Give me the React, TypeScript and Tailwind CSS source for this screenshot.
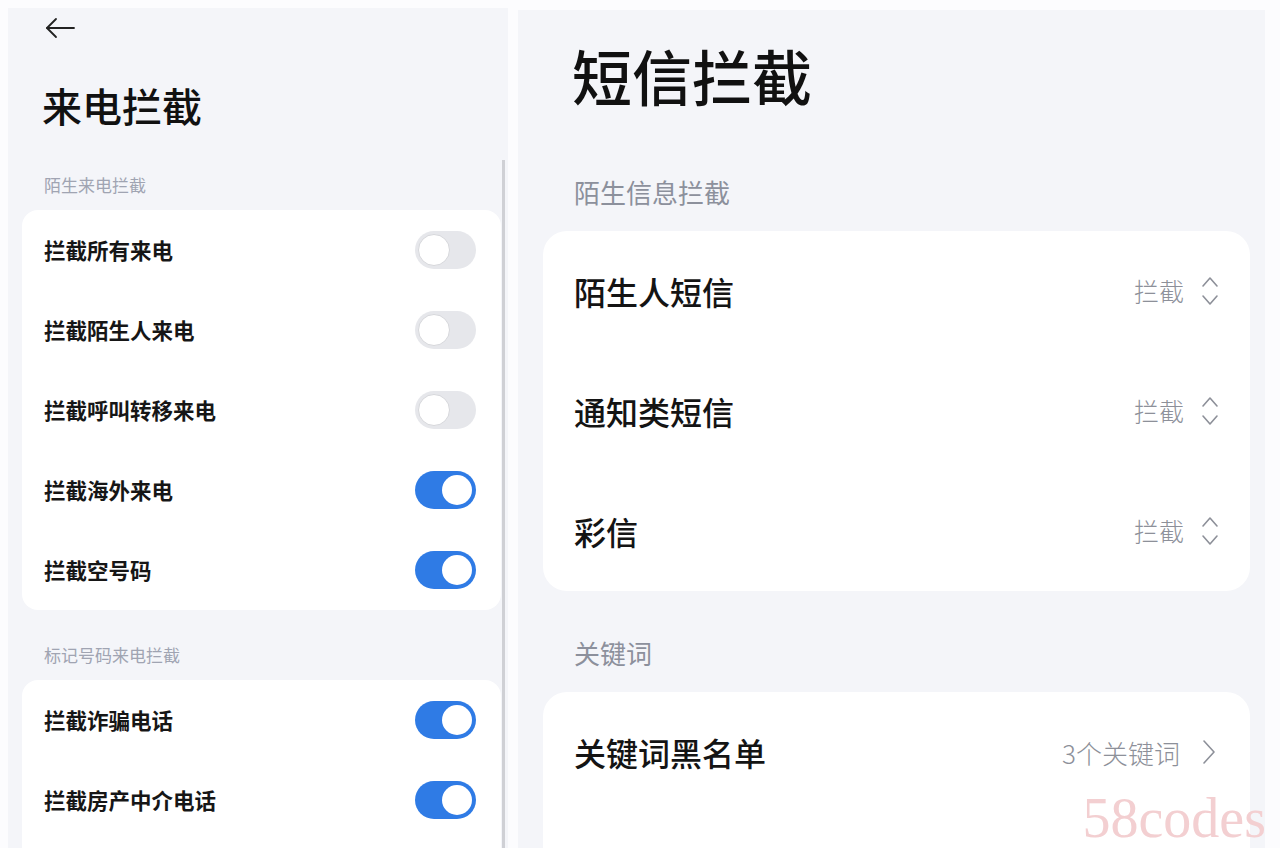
import React from "react"

const font = { fontFamily: '"Noto Sans CJK SC", "Noto Sans", sans-serif' }

const strangerCalls = [
  { label: "拦截所有来电", on: false },
  { label: "拦截陌生人来电", on: false },
  { label: "拦截呼叫转移来电", on: false },
  { label: "拦截海外来电", on: true },
  { label: "拦截空号码", on: true },
]

const markedCalls = [
  { label: "拦截诈骗电话", on: true },
  { label: "拦截房产中介电话", on: true },
]

const smsRows = ["陌生人短信", "通知类短信", "彩信"]

function Toggle({ on }: { on: boolean }) {
  return (
    <div
      className={
        on
          ? "flex h-[38px] w-[61px] items-center justify-end rounded-full bg-[#2f7be5] px-[4px]"
          : "flex h-[38px] w-[61px] items-center justify-start rounded-full bg-[#e6e7eb] px-[3px]"
      }
    >
      <div
        className={
          on
            ? "h-[30px] w-[30px] rounded-full bg-white"
            : "h-[32px] w-[32px] rounded-full border border-[#d6d7db] bg-white"
        }
      />
    </div>
  )
}

function UpDown() {
  return (
    <svg width="20" height="36" viewBox="0 0 20 36" fill="none" stroke="#8d9099" strokeWidth="1.6" strokeLinecap="round" strokeLinejoin="round">
      <polyline points="3,13 10,5 17,13" />
      <polyline points="3,23 10,31 17,23" />
    </svg>
  )
}

function CallRow({ label, on }: { label: string; on: boolean }) {
  return (
    <div className="flex h-[80px] items-center justify-between">
      <span className="text-[21.5px] font-semibold text-[#161616]">{label}</span>
      <Toggle on={on} />
    </div>
  )
}

export default function App() {
  return (
    <div className="relative flex h-[848px] w-[1280px] overflow-hidden bg-[#fcfcfe] pl-[8px] pt-[8px]" style={font}>
      {/* left: incoming call blocking */}
      <div className="flex w-[500px] bg-[#f4f5f9]">
        <div className="flex flex-1 flex-col pl-[14px]">
          <div className="ml-[22px] mt-[8px] h-[24px]">
            <svg width="32" height="24" viewBox="0 0 32 24" fill="none" stroke="#222" strokeWidth="1.8" strokeLinecap="round" strokeLinejoin="round">
              <line x1="3" y1="12" x2="30" y2="12" />
              <polyline points="12,3 3,12 12,21" />
            </svg>
          </div>
          <h1 className="ml-[20px] mt-[41px] text-[40px] leading-[48px] font-medium text-[#111]">来电拦截</h1>
          <p className="ml-[22px] mt-[44px] text-[17px] leading-[24px] text-[#a0a4b2]">陌生来电拦截</p>
          <div className="mt-[13px] rounded-[16px] bg-white pl-[22px] pr-[25px]">
            {strangerCalls.map((r) => (
              <CallRow key={r.label} label={r.label} on={r.on} />
            ))}
          </div>
          <p className="ml-[22px] mt-[33px] text-[17px] leading-[24px] text-[#a0a4b2]">标记号码来电拦截</p>
          <div className="mt-[13px] rounded-t-[16px] bg-white pl-[22px] pr-[25px] pb-[40px]">
            {markedCalls.map((r) => (
              <CallRow key={r.label} label={r.label} on={r.on} />
            ))}
          </div>
        </div>
        <div className="ml-[1px] mr-[3px] mt-[152px] w-[3px] bg-[#cfd0d5]" />
      </div>

      {/* right: sms blocking */}
      <div className="ml-[10px] mt-[2px] flex w-[747px] flex-col bg-[#f4f5f9] pl-[25px] pr-[15px]">
        <h1 className="ml-[29px] mt-[29px] text-[60px] leading-[72px] font-medium text-[#111]">短信拦截</h1>
        <p className="ml-[31px] mt-[63px] text-[26px] leading-[36px] text-[#8c909c]">陌生信息拦截</p>
        <div className="mt-[21px] rounded-[24px] bg-white pl-[31px] pr-[30px]">
          {smsRows.map((label) => (
            <div key={label} className="flex h-[120px] items-center justify-between">
              <span className="text-[32px] font-medium text-[#141414]">{label}</span>
              <div className="flex items-center gap-[16px]">
                <span className="text-[25px] font-light text-[#8d9099]">拦截</span>
                <UpDown />
              </div>
            </div>
          ))}
        </div>
        <p className="ml-[31px] mt-[44px] text-[26px] leading-[36px] text-[#8c909c]">关键词</p>
        <div className="mt-[21px] rounded-t-[24px] bg-white pl-[31px] pr-[34px] pb-[60px]">
          <div className="flex h-[120px] items-center justify-between">
            <span className="text-[32px] font-medium text-[#141414]">关键词黑名单</span>
            <div className="flex items-center gap-[22px]">
              <span className="text-[26px] font-light text-[#8d9099]">3个关键词</span>
              <svg width="14" height="28" viewBox="0 0 14 28" fill="none" stroke="#8d9099" strokeWidth="1.6" strokeLinecap="round" strokeLinejoin="round">
                <polyline points="2,3 12,14 2,25" />
              </svg>
            </div>
          </div>
        </div>
      </div>

      <span
        className="absolute bottom-[0px] right-[14px] text-[56px] leading-[60px] text-[#f3cfd1]"
        style={{ fontFamily: '"Liberation Serif", serif' }}
      >
        58codes
      </span>
    </div>
  )
}
